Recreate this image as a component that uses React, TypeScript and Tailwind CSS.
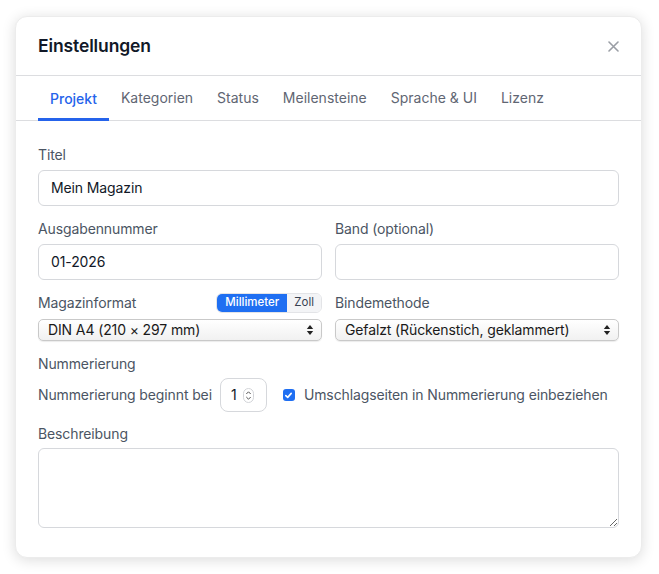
import React from "react";

const font = { fontFamily: "Inter, 'Noto Sans', sans-serif", letterSpacing: "-0.12px" };

function Field({ label, value }: { label: string; value?: string }) {
  return (
    <div className="flex flex-col">
      <div className="h-5 leading-5 text-sm text-[#4b5563]">{label}</div>
      <div className="mt-[5px] h-9 rounded-md border border-[#d6d8dc] bg-white px-3 flex items-center text-sm text-[#111827]">
        {value}
      </div>
    </div>
  );
}

function SelectArrows() {
  return (
    <svg width="8" height="12" viewBox="0 0 8 12" className="shrink-0">
      <path d="M4 1 L7.2 5 L0.8 5 Z" fill="#222" />
      <path d="M4 11 L7.2 7 L0.8 7 Z" fill="#222" />
    </svg>
  );
}

function FakeSelect({ text }: { text: string }) {
  return (
    <div className="h-[22px] rounded-[5px] border border-[#c9c9c9] bg-gradient-to-b from-white to-[#f1f1f1] shadow-[0_1px_1px_rgba(0,0,0,0.08)] flex items-center justify-between pl-[9px] pr-[7px] text-sm text-[#1a1a1a]">
      <span>{text}</span>
      <SelectArrows />
    </div>
  );
}

export default function App() {
  return (
    <div className="min-h-[574px] w-[659px] bg-white pt-4 pl-[15px]" style={font}>
      <div className="w-[627px] rounded-xl bg-white shadow-[0_2px_14px_rgba(0,0,0,0.14)] border border-[#ececec]">
        <div className="h-[59px] flex items-center justify-between pl-[22px] pr-[22px] border-b border-[#dcdde0]">
          <div className="text-[17.5px] font-semibold text-[#111827]">Einstellungen</div>
          <svg width="11" height="11" viewBox="0 0 11 11">
            <path d="M1 1 L10 10 M10 1 L1 10" stroke="#9a9ea5" strokeWidth="1.6" strokeLinecap="round" />
          </svg>
        </div>
        <div className="flex pl-[22px] border-b border-[#dcdde0] h-[45px] tracking-normal">
          {["Projekt", "Kategorien", "Status", "Meilensteine", "Sprache & UI", "Lizenz"].map((t, i) => (
            <div
              key={t}
              className={
                i === 0
                  ? "px-3 flex items-center text-sm font-medium text-[#2563eb] border-b-[3px] border-[#2563eb] pt-[3px] -mb-px"
                  : "px-3 flex items-center text-sm text-[#5f6673] pb-0"
              }
            >
              {t}
            </div>
          ))}
        </div>
        <div className="px-[22px] pt-6 pb-[29px]">
          <Field label="Titel" value="Mein Magazin" />
          <div className="mt-[13px] grid grid-cols-2 gap-[13px]">
            <Field label="Ausgabennummer" value="01-2026" />
            <Field label="Band (optional)" />
          </div>
          <div className="mt-[13px] grid grid-cols-2 gap-[13px]">
            <div className="flex flex-col">
              <div className="h-5 flex items-center justify-between">
                <span className="text-sm text-[#4b5563]">Magazinformat</span>
                <div className="flex h-5 rounded-md overflow-hidden border border-[#e3e4e7] text-[11.5px] tracking-normal">
                  <div className="bg-[#1f6ff2] text-white font-medium px-2 flex items-center">Millimeter</div>
                  <div className="bg-[#f3f4f6] text-[#374151] px-[7px] flex items-center">Zoll</div>
                </div>
              </div>
              <div className="mt-[6px]">
                <FakeSelect text="DIN A4 (210 × 297 mm)" />
              </div>
            </div>
            <div className="flex flex-col">
              <div className="h-5 leading-5 text-sm text-[#4b5563]">Bindemethode</div>
              <div className="mt-[6px]">
                <FakeSelect text="Gefalzt (Rückenstich, geklammert)" />
              </div>
            </div>
          </div>
          <div className="mt-[13px] h-5 leading-5 text-sm text-[#4b5563]">Nummerierung</div>
          <div className="mt-1 flex items-center h-[34px]">
            <span className="text-sm text-[#4b5563]">Nummerierung beginnt bei</span>
            <div className="ml-2 h-[34px] w-[47px] rounded-lg border border-[#d6d8dc] flex items-center pl-[10px] gap-[6px]">
              <span className="text-sm text-[#111827]">1</span>
              <svg width="11" height="15" viewBox="0 0 11 15">
                <rect x="0.5" y="0.5" width="10" height="14" rx="5" fill="none" stroke="#d2d4d8" />
                <path d="M3.3 6 L5.5 3.8 L7.7 6" fill="none" stroke="#555" strokeWidth="1" />
                <path d="M3.3 9 L5.5 11.2 L7.7 9" fill="none" stroke="#555" strokeWidth="1" />
              </svg>
            </div>
            <div className="ml-4 w-3 h-3 rounded-[3px] bg-[#1f6ff2] flex items-center justify-center">
              <svg width="9" height="9" viewBox="0 0 9 9">
                <path d="M1.8 4.6 L3.7 6.4 L7.2 2.4" fill="none" stroke="white" strokeWidth="1.6" strokeLinecap="round" strokeLinejoin="round" />
              </svg>
            </div>
            <span className="ml-[9px] text-sm text-[#4b5563]">Umschlagseiten in Nummerierung einbeziehen</span>
          </div>
          <div className="mt-3 h-5 leading-5 text-sm text-[#4b5563]">Beschreibung</div>
          <textarea className="mt-1 block w-full h-20 rounded-md border border-[#d6d8dc] bg-white outline-none" />
        </div>
      </div>
    </div>
  );
}
